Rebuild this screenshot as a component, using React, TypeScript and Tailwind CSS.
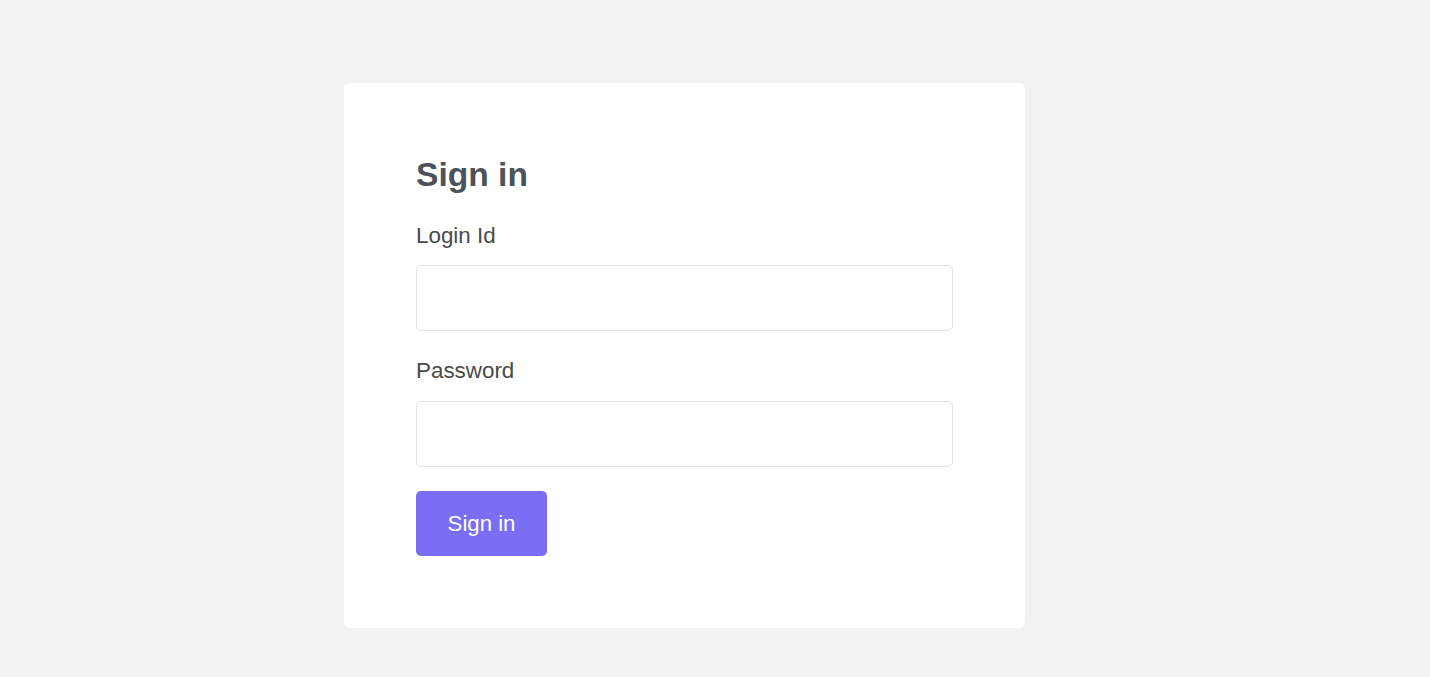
export default function App() {
  return (
    <div className="min-h-screen bg-[#f2f2f2] pt-[83px] pl-[344px] font-['Liberation_Sans',Arial,sans-serif]">
      <div className="w-[681px] rounded-md bg-white p-[72px]">
        <h1 className="text-[33.6px] font-bold leading-[40px] text-[#4b525c]">Sign in</h1>
        <form onSubmit={(e) => e.preventDefault()}>
          <label htmlFor="loginId" className="mt-[28px] block text-[22.4px] leading-[26px] text-[#4a4a4a]">
            Login Id
          </label>
          <input
            id="loginId"
            type="text"
            className="mt-[16px] block h-[66px] w-full rounded-[5px] border border-[#e2e2e2] px-4 text-[22px] outline-none"
          />
          <label htmlFor="password" className="mt-[27px] block text-[22.4px] leading-[26px] text-[#4a4a4a]">
            Password
          </label>
          <input
            id="password"
            type="password"
            className="mt-[17px] block h-[66px] w-full rounded-[5px] border border-[#e2e2e2] px-4 text-[22px] outline-none"
          />
          <button
            type="submit"
            className="mt-[24px] block h-[65px] w-[131px] rounded-[5px] bg-[#7a6ef4] text-[22.2px] text-white"
          >
            Sign in
          </button>
        </form>
      </div>
    </div>
  );
}
